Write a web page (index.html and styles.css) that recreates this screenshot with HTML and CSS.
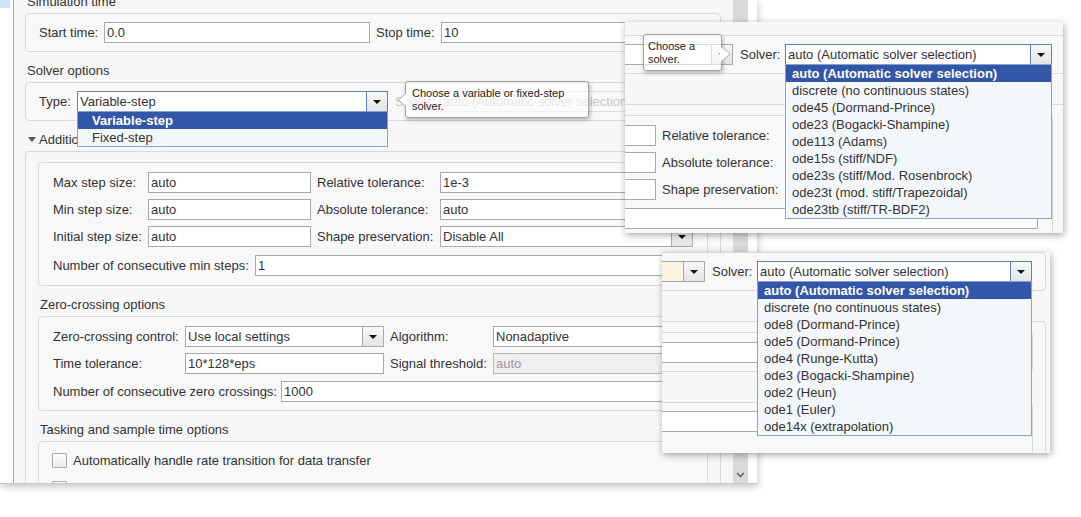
FILE: index.html
```html
<!DOCTYPE html>
<html>
<head>
<meta charset="utf-8">
<link rel="stylesheet" href="styles.css">
</head>
<body>
<div class="main">
  <div class="strip"><div class="strip-sel"></div></div>
  <div class="pane">
    <div class="content">
      <div class="head">Simulation time</div>
      <div class="box tbox">
        <div class="row">
          <span class="lbl l-start">Start time:</span>
          <span class="inp w-start">0.0</span>
          <span class="lbl l-stop">Stop time:</span>
          <span class="inp flex">10</span>
        </div>
      </div>
      <div class="head">Solver options</div>
      <div class="box tbox">
        <div class="row">
          <span class="lbl l-type">Type:</span>
          <div class="sel w-type focus">
            <span class="sel-t">Variable-step</span><span class="sel-b"><i class="tri"></i></span>
            <div class="dd dd-type">
              <div class="it on">Variable-step</div>
              <div class="it">Fixed-step</div>
            </div>
          </div>
          <span class="lbl l-solver faded">Solver:</span>
          <div class="sel flex faded"><span class="sel-t">auto (Automatic solver selection)</span><span class="sel-b"><i class="tri"></i></span></div>
        </div>
      </div>
      <div class="head sub"><i class="disc"></i>Additional options</div>
      <div class="obox">
        <div class="box ibox">
          <div class="row">
            <span class="lbl l-a">Max step size:</span><span class="inp w-a">auto</span>
            <span class="lbl l-b">Relative tolerance:</span><span class="inp flex">1e-3</span>
          </div>
          <div class="row">
            <span class="lbl l-a">Min step size:</span><span class="inp w-a">auto</span>
            <span class="lbl l-b">Absolute tolerance:</span><span class="inp flex">auto</span>
          </div>
          <div class="row">
            <span class="lbl l-a">Initial step size:</span><span class="inp w-a">auto</span>
            <span class="lbl l-b">Shape preservation:</span>
            <div class="sel flex"><span class="sel-t">Disable All</span><span class="sel-b"><i class="tri"></i></span></div>
          </div>
          <div class="row more">
            <span class="lbl l-minsteps">Number of consecutive min steps:</span><span class="inp flex">1</span>
          </div>
        </div>
        <div class="head h2">Zero-crossing options</div>
        <div class="box ibox zbox">
          <div class="row">
            <span class="lbl l-zc">Zero-crossing control:</span>
            <div class="sel w-zc"><span class="sel-t">Use local settings</span><span class="sel-b"><i class="tri"></i></span></div>
            <span class="lbl l-alg">Algorithm:</span><span class="inp flex">Nonadaptive</span>
          </div>
          <div class="row">
            <span class="lbl l-zc">Time tolerance:</span><span class="inp w-zc">10*128*eps</span>
            <span class="lbl l-alg">Signal threshold:</span><span class="inp flex dis">auto</span>
          </div>
          <div class="row zmore">
            <span class="lbl l-nzc">Number of consecutive zero crossings:</span><span class="inp flex">1000</span>
          </div>
        </div>
        <div class="head h2">Tasking and sample time options</div>
        <div class="box ibox kbox">
          <div class="crow"><span class="chk"></span><span class="lbl">Automatically handle rate transition for data transfer</span></div>
          <div class="crow"><span class="chk"></span><span class="lbl">Higher priority value indicates higher task priority</span></div>
        </div>
      </div>
    </div>
  </div>
  <div class="sbar">
    <div class="thumb">
      <svg class="chev" width="9" height="6" viewBox="0 0 9 6"><polyline points="1,1 4.5,4.5 8,1" fill="none" stroke="#555" stroke-width="1.3"/></svg>
    </div>
  </div>
  <div class="tip tip1">Choose a variable or fixed-step<br>solver.</div>
</div>

<div class="pop pop1">
  <div class="view v1">
    <div class="head">Solver options</div>
    <div class="box tbox">
      <div class="row">
        <span class="lbl l-type">Type:</span>
        <div class="sel w-type"><span class="sel-t">Variable-step</span><span class="sel-b"><i class="tri"></i></span></div>
        <span class="lbl l-solver">Solver:</span>
        <div class="sel flex focus"><span class="sel-t">auto (Automatic solver selection)</span><span class="sel-b"><i class="tri"></i></span>
          <div class="dd dd-sol">
            <div class="it on">auto (Automatic solver selection)</div>
            <div class="it">discrete (no continuous states)</div>
            <div class="it">ode45 (Dormand-Prince)</div>
            <div class="it">ode23 (Bogacki-Shampine)</div>
            <div class="it">ode113 (Adams)</div>
            <div class="it">ode15s (stiff/NDF)</div>
            <div class="it">ode23s (stiff/Mod. Rosenbrock)</div>
            <div class="it">ode23t (mod. stiff/Trapezoidal)</div>
            <div class="it">ode23tb (stiff/TR-BDF2)</div>
          </div>
        </div>
      </div>
    </div>
    <div class="head sub"><i class="disc"></i>Additional options</div>
    <div class="obox">
      <div class="box ibox">
        <div class="row">
          <span class="lbl l-a">Max step size:</span><span class="inp w-a">auto</span>
          <span class="lbl l-b">Relative tolerance:</span><span class="inp flex">1e-3</span>
        </div>
        <div class="row">
          <span class="lbl l-a">Min step size:</span><span class="inp w-a">auto</span>
          <span class="lbl l-b">Absolute tolerance:</span><span class="inp flex">auto</span>
        </div>
        <div class="row">
          <span class="lbl l-a">Initial step size:</span><span class="inp w-a">auto</span>
          <span class="lbl l-b">Shape preservation:</span>
          <div class="sel flex"><span class="sel-t">Disable All</span><span class="sel-b"><i class="tri"></i></span></div>
        </div>
        <div class="row more">
          <span class="lbl l-minsteps">Number of consecutive min steps:</span><span class="inp flex">1</span>
        </div>
      </div>
    </div>
  </div>
  <div class="tip tip2">Choose a<br>solver.</div>
</div>

<div class="pop pop2">
  <div class="view v2">
    <div class="head">Solver options</div>
    <div class="box tbox">
      <div class="row">
        <span class="lbl l-type">Type:</span>
        <div class="sel w-type cream"><span class="sel-t">Fixed-step</span><span class="sel-b"><i class="tri"></i></span></div>
        <span class="lbl l-solver">Solver:</span>
        <div class="sel flex focus"><span class="sel-t">auto (Automatic solver selection)</span><span class="sel-b"><i class="tri"></i></span>
          <div class="dd dd-sol">
            <div class="it on">auto (Automatic solver selection)</div>
            <div class="it">discrete (no continuous states)</div>
            <div class="it">ode8 (Dormand-Prince)</div>
            <div class="it">ode5 (Dormand-Prince)</div>
            <div class="it">ode4 (Runge-Kutta)</div>
            <div class="it">ode3 (Bogacki-Shampine)</div>
            <div class="it">ode2 (Heun)</div>
            <div class="it">ode1 (Euler)</div>
            <div class="it">ode14x (extrapolation)</div>
          </div>
        </div>
      </div>
    </div>
    <div class="head sub"><i class="disc"></i>Additional options</div>
    <div class="obox">
      <div class="box ibox fbox">
        <div class="row">
          <span class="lbl l-fs">Fixed-step size (fundamental sample time):</span><span class="inp flex">auto</span>
        </div>
      </div>
      <div class="head h2">Tasking and sample time options</div>
      <div class="box ibox fbox2">
        <div class="row">
          <span class="lbl l-ps">Periodic sample time constraint:</span><span class="inp flex">Unconstrained</span>
        </div>
      </div>
    </div>
  </div>
</div>
</body>
</html>
```

FILE: styles.css
```css
* { box-sizing: border-box; margin: 0; padding: 0; }
html, body { background: #fff; }
body {
  width: 1081px;
  height: 517px;
  overflow: hidden;
  position: relative;
  font: 13px/16px "Liberation Sans", Arial, sans-serif;
  color: #333;
}

/* main window */
.main {
  position: relative;
  width: 757px;
  height: 484px;
  display: flex;
  background: #fff;
  border-bottom: 1px solid #c8c8c8;
  box-shadow: 1px 3px 7px rgba(0, 0, 0, 0.22);
}
.strip {
  width: 14px;
  flex-shrink: 0;
  border-right: 1px solid #a8a8a8;
  background: #fff;
}
.strip-sel { width: 10px; height: 8px; background: #cfe3f5; }
.pane {
  width: 719px;
  flex-shrink: 0;
  overflow: hidden;
  background: #f7f7f7;
}
.content { margin-top: -17px; padding: 0 12px 0 11px; }
.sbar { width: 24px; flex-shrink: 0; position: relative; background: #fff; }
.thumb {
  width: 15px;
  height: 100%;
  background: #d9d9d9;
  position: relative;
}
.chev { position: absolute; left: 3px; top: 472px; }

/* generic dialog pieces */
.head {
  padding: 11px 2px 3px;
  line-height: 16px;
  white-space: nowrap;
}
.head.sub { padding-left: 3px; }
.disc {
  display: inline-block;
  border-left: 4px solid transparent;
  border-right: 4px solid transparent;
  border-top: 5px solid #555;
  margin-right: 3px;
  vertical-align: 2px;
}
.box {
  border: 1px solid #d8d8d8;
  border-radius: 4px;
  background: #f8f8f8;
}
.tbox { padding: 8px 13px; }
.obox {
  border: 1px solid #d8d8d8;
  border-bottom: none;
  border-radius: 4px 4px 0 0;
  padding: 10px 12px 0;
}
.ibox { padding: 9px 14px; }
.zbox { padding: 9px 14px 8px; }
.kbox { padding: 11px 13px; height: 60px; }
.fbox { padding: 9px 14px 8px; }
.fbox2 { padding: 8px 14px; height: 60px; }

.row { display: flex; align-items: center; height: 21px; }
.row + .row { margin-top: 6px; }
.row.more { margin-top: 8px; }
.row.zmore { margin-top: 7px; }

.lbl { flex-shrink: 0; white-space: nowrap; }
.inp {
  flex-shrink: 0;
  height: 21px;
  border: 1px solid #a9a9a9;
  background: #fff;
  padding: 0 2px;
  line-height: 19px;
  white-space: nowrap;
  overflow: hidden;
}
.inp.dis { background: #efefef; color: #9a9a9a; border-color: #b8b8b8; }
.flex { flex: 1; min-width: 0; }

.sel {
  position: relative;
  flex-shrink: 0;
  display: flex;
  height: 21px;
  border: 1px solid #a9a9a9;
  background: #fff;
}
.sel.flex { flex: 1; }
.sel-t {
  flex: 1;
  padding-left: 2px;
  line-height: 19px;
  white-space: nowrap;
  overflow: hidden;
}
.sel-b {
  width: 21px;
  flex-shrink: 0;
  border-left: 1px solid #a9a9a9;
  background: linear-gradient(#f8f8f8, #e4e4e4);
  display: flex;
  align-items: center;
  justify-content: center;
}
.tri {
  display: block;
  border-left: 4px solid transparent;
  border-right: 4px solid transparent;
  border-top: 4px solid #111;
}
.sel.focus { border-color: #5a82c0; }
.sel.focus .sel-b { border-left-color: #5a82c0; }
.sel.cream .sel-t { background: #fbf5e4; }
.sel.faded { border-color: #dcdcdc; color: #c4c4c4; background: #fafafa; }
.sel.faded .sel-b { border-left-color: #dcdcdc; background: #f4f4f4; }
.sel.faded .tri { border-top-color: #c4c4c4; }
.lbl.faded { color: #c4c4c4; }

/* dropdown lists */
.dd {
  position: absolute;
  left: -1px;
  top: 19px;
  width: calc(100% + 2px);
  border: 1px solid #80a4d4;
  background: #f4f7fa;
  z-index: 5;
}
.it {
  height: 17px;
  line-height: 17px;
  padding-left: 14px;
  white-space: nowrap;
}
.dd-sol .it { padding-left: 6px; }
.it.on { background: #3456a8; color: #fff; font-weight: bold; }

/* widths */
.l-start, .l-stop { width: 65px; }
.l-stop { margin-left: 6px; }
.w-start { width: 266px; }
.l-type { width: 38px; }
.w-type { width: 311px; }
.l-solver { width: 45px; margin-left: 7px; }
.l-a { width: 95px; }
.w-a { width: 163px; }
.l-b { width: 123px; margin-left: 6px; }
.l-minsteps { width: 202px; }
.l-zc { width: 132px; }
.w-zc { width: 199px; }
.l-alg { width: 103px; margin-left: 6px; }
.l-nzc { width: 228px; }
.l-fs { width: 262px; }
.l-ps { width: 200px; }

/* checkboxes */
.crow { display: flex; align-items: center; height: 15px; }
.crow + .crow { margin-top: 13px; }
.chk {
  width: 15px;
  height: 15px;
  flex-shrink: 0;
  border: 1px solid #a9a9a9;
  border-radius: 1px;
  background: linear-gradient(#fdfdfd, #ececec);
  margin-right: 6px;
}

/* tooltips */
.tip {
  position: absolute;
  z-index: 8;
  background: rgba(255, 255, 255, 0.6);
  border: 1px solid #a4a4a4;
  border-radius: 3px;
  box-shadow: 1px 2px 4px rgba(0, 0, 0, 0.28);
  font-size: 11px;
  line-height: 13px;
  color: #222;
  white-space: nowrap;
}
.tip::before, .tip::after {
  content: "";
  position: absolute;
  border-style: solid;
  border-color: transparent;
}
.tip1 { left: 405px; top: 81px; width: 184px; height: 37px; padding: 5px 6px; }
.tip1::before {
  left: -8px; top: 11px;
  border-width: 7px 8px 7px 0;
  border-right-color: #a4a4a4;
}
.tip1::after {
  left: -7px; top: 11px;
  border-width: 7px 8px 7px 0;
  border-right-color: #fff;
}
.tip2 { left: 18px; top: 12px; width: 79px; height: 37px; padding: 5px 4px; }
.tip2::before {
  right: -10px; top: 11px;
  border-width: 8px 0 8px 10px;
  border-left-color: #a4a4a4;
}
.tip2::after {
  right: -9px; top: 11px;
  border-width: 8px 0 8px 10px;
  border-left-color: #fff;
}

/* zoomed pop-out windows */
.pop {
  position: absolute;
  overflow: hidden;
  background: #f7f7f7;
  box-shadow: 1px 2px 7px rgba(0, 0, 0, 0.35);
  z-index: 10;
}
.pop1 { left: 625px; top: 22px; width: 438px; height: 211px; }
.pop2 { left: 662px; top: 252px; width: 388px; height: 201px; }
.view { position: relative; padding: 0 12px 0 11px; }
.v1 { width: 719px; margin-left: -266px; margin-top: -17px; }
.v2 { width: 727px; margin-left: -331px; margin-top: -30px; }
```
